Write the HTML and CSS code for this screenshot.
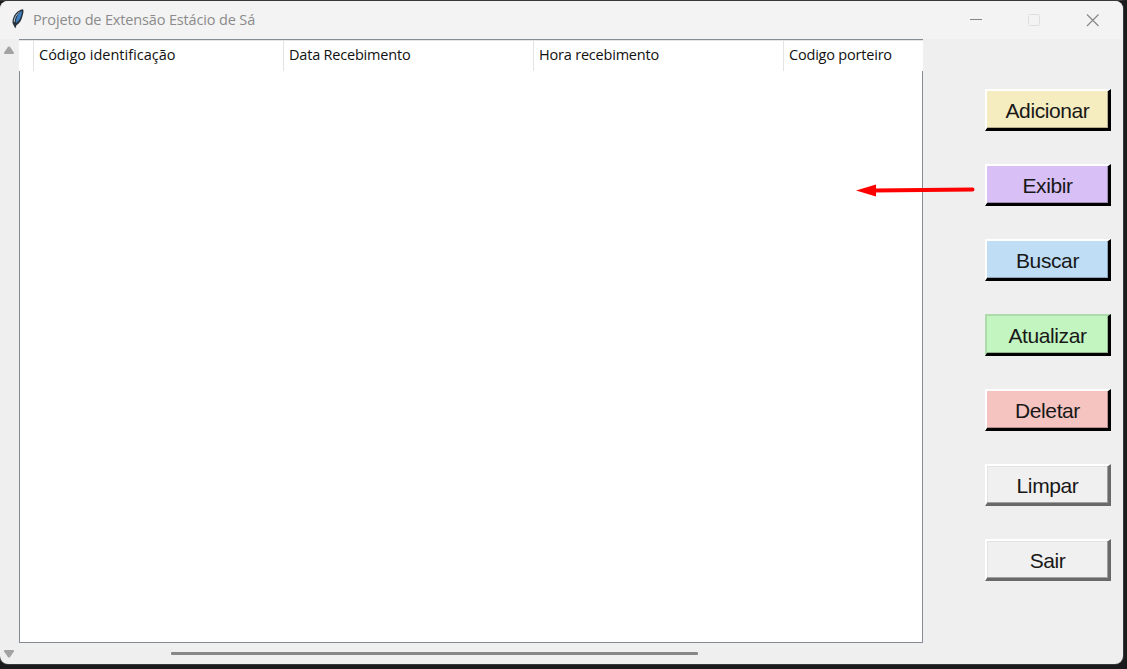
FILE: index.html
```html
<!DOCTYPE html>
<html lang="pt-BR">
<head>
<meta charset="utf-8">
<title>Projeto de Extensão Estácio de Sá</title>
<link rel="stylesheet" href="styles.css">
</head>
<body>
<main class="window">
  <header class="titlebar">
    <svg class="feather" width="14" height="20" viewBox="0 0 14 20">
      <path d="M12 .3C8.500 .8 4.500 3.500 2.600 8 1 11.500 1.200 14 2.500 16L4.300 19.500 5.600 16C9.500 14 11 9.500 11.800 6 12.600 3.500 12.800 1.500 12 .3Z" fill="#26323d"/>
      <path d="M10.800 2C7.500 4 5.300 7.500 4.800 14 7.800 12.500 9.500 9 10.300 6 10.800 4 11 3 10.800 2Z" fill="#3b80c6"/>
      <path d="M8.500 3C5.500 5.500 3.300 8.500 3.200 13" fill="none" stroke="#b9c9d6" stroke-width="1"/>
    </svg>
    <h1 class="title">Projeto de Extensão Estácio de Sá</h1>
    <svg class="controls" width="134" height="14" viewBox="0 0 134 14" fill="none">
      <path d="M1 6.500H13" stroke="#858585"/>
      <rect x="59.500" y="1.500" width="11" height="11" rx="1" stroke="#dedede"/>
      <path d="M118 1.500L129.500 13M129.500 1.500L118 13" stroke="#858585" stroke-width="1.100"/>
    </svg>
  </header>
  <div class="content">
    <div class="vscroll">
      <svg width="12" height="9" viewBox="0 0 12 9"><path d="M5 .8Q6 0 7 .8L11 6.800Q11.200 8 10 8H2Q.8 8 1 6.800Z" fill="#a3a3a3"/></svg>
      <svg width="12" height="9" viewBox="0 0 12 9"><path d="M5 8.200Q6 9 7 8.200L11 2.200Q11.200 1 10 1H2Q.8 1 1 2.200Z" fill="#a3a3a3"/></svg>
    </div>
    <div class="main">
      <section class="table">
        <div class="columns">
          <span class="gutter"></span>
          <span class="column wide">Código identificação</span>
          <span class="column">Data Recebimento</span>
          <span class="column">Hora recebimento</span>
          <span class="column">Codigo porteiro</span>
        </div>
        <div class="rows"></div>
      </section>
      <div class="hscroll"><div class="thumb"></div></div>
    </div>
    <nav class="actions">
      <button class="action yellow">Adicionar</button>
      <button class="action purple">Exibir</button>
      <button class="action blue">Buscar</button>
      <button class="action green">Atualizar</button>
      <button class="action red">Deletar</button>
      <button class="action gray">Limpar</button>
      <button class="action gray">Sair</button>
    </nav>
  </div>
  <svg class="arrow" width="122" height="16" viewBox="0 0 122 16">
    <path d="M18 8.500L116.500 7.500" stroke="#f00" stroke-width="4" stroke-linecap="round"/>
    <path d="M0 8.500L20 2.500V14.500Z" fill="#f00"/>
  </svg>
</main>
</body>
</html>
```
FILE: styles.css
```css
* { box-sizing: border-box; }
body {
  margin: 0;
  height: 669px;
  padding: 1px 4px 5px 0;
  overflow: hidden;
  background: linear-gradient(90deg, #3a393b 0, #3a393b 1122px, #202124 1124px) top / 100% 1px no-repeat, #1b1b1e;
}
.window {
  position: relative;
  display: flex;
  flex-direction: column;
  width: 1123px;
  height: 663px;
  overflow: hidden;
  border-radius: 8px;
  background: #efefef;
  box-shadow: 0 0 0 1px #37383a;
}
.titlebar {
  display: flex;
  align-items: center;
  height: 38px;
  padding: 0 20px 0 11px;
  background: #f3f3f3;
}
.feather { margin-top: -3px; }
.title {
  flex: 1;
  margin: -1px 0 0 8px;
  color: #8b8b8b;
  font: 400 14.5px "Open Sans", "Noto Sans", sans-serif;
  letter-spacing: -0.15px;
}
.controls { flex: none; }
.content { display: flex; flex: 1; }
.vscroll {
  display: flex;
  flex-direction: column;
  justify-content: space-between;
  width: 19px;
  padding: 7px 0 6px 3px;
}
.main { display: flex; flex-direction: column; width: 904px; }
.table { display: flex; flex-direction: column; height: 604px; }
.columns {
  display: flex;
  height: 32px;
  overflow: hidden;
  border-top: 1px solid #858c96;
  background: #fff;
  box-shadow: inset 0 1px #e3e5e7;
}
.gutter { width: 14px; flex: none; }
.column {
  flex: none;
  width: 250px;
  padding: 5px 0 0 5px;
  border-left: 1px solid #e4e4e4;
  color: #111;
  font: 400 14.5px/20px "Open Sans", "Noto Sans", sans-serif;
  letter-spacing: -0.2px;
  white-space: nowrap;
}
.wide { letter-spacing: 0; }
.rows {
  flex: 1;
  border: 1px solid #858c96;
  border-top: 0;
  background: #fff;
}
.hscroll { padding: 9px 0 0 152px; }
.thumb { width: 527px; height: 3px; border-radius: 1px; background: #868686; }
.actions {
  display: flex;
  flex-direction: column;
  gap: 33px;
  padding: 50px 0 0 62px;
}
.action {
  width: 126px;
  height: 42px;
  padding: 2px 0 0;
  border: 3px solid;
  border-width: 2px 3px 3px 2px;
  border-color: #fff #000 #000 #fff;
  border-radius: 0;
  color: #181818;
  font: 21px "Liberation Sans", Arial, sans-serif;
  letter-spacing: -0.4px;
}
.yellow { background: #f5ecc0; box-shadow: inset -1px -1px #b5ae8e; }
.purple { background: #d8bff5; box-shadow: inset -1px -1px #a08db5; }
.blue { background: #bfddf5; box-shadow: inset -1px -1px #8da3b5; }
.green { background: #c3f5c0; border-color: #addbab #000 #000 #addbab; box-shadow: inset -1px -1px #90b58e; }
.red { background: #f5c3c0; box-shadow: inset -1px -1px #b5908e; }
.gray { background: #f0f0f0; border-color: #fff #696969 #696969 #fff; box-shadow: inset -1px -1px #a0a0a0, inset 0 0 0 1px #e3e3e3; }
.arrow { position: absolute; left: 856px; top: 181px; }
```
